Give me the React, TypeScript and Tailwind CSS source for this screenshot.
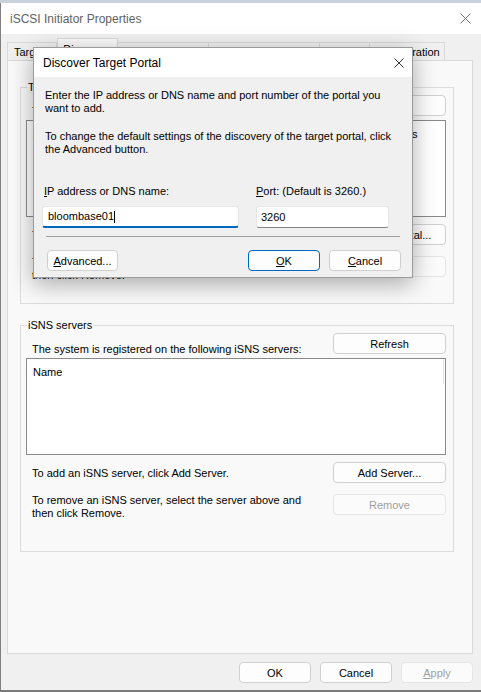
import React from "react";

const FONT = "font-['Liberation_Sans',Arial,sans-serif]";

type ButtonProps = {
  children: React.ReactNode;
  className?: string;
  disabled?: boolean;
  primary?: boolean;
};

function Button({ children, className = "", disabled, primary }: ButtonProps) {
  const tone = disabled
    ? "border-[#e5e5e5] bg-[#fbfbfb] text-[#a0a0a0]"
    : primary
      ? "border-[#0067c0] bg-[#fdfdfd] text-black"
      : "border-[#d0d0d0] bg-[#fdfdfd] text-black";
  return (
    <button
      disabled={disabled}
      className={`flex h-[21px] shrink-0 items-center justify-center rounded-[4px] border leading-[14px] ${tone} ${className}`}
    >
      {children}
    </button>
  );
}

// access key: first letter underlined
const Key = ({ children }: { children: string }) => (
  <span className="inline-block first-letter:underline">{children}</span>
);

const CloseIcon = ({ className }: { className: string }) => (
  <svg viewBox="0 0 10 10" className={className} fill="none" stroke="currentColor" strokeWidth="0.9">
    <path d="M0.5 0.5 9.5 9.5 M9.5 0.5 0.5 9.5" />
  </svg>
);

const tabs = [
  { label: "Targets", w: "w-[50px]" },
  { label: "Discovery", w: "w-[61px]", active: true },
  { label: "Favorite Targets", w: "w-[91px]" },
  { label: "Volumes and Devices", w: "w-[111px]" },
  { label: "RADIUS", w: "w-[50px]" },
  { label: "Configuration", w: "w-[75px]" },
];

function Group({ title, className = "", children }: { title: string; className?: string; children: React.ReactNode }) {
  return (
    <fieldset className={`ml-[12px] w-[434px] border border-[#dcdcdc] pl-[5px] pr-[7px] ${className}`}>
      <legend className="ml-[1px] px-[1px] leading-[14px]">{title}</legend>
      {children}
    </fieldset>
  );
}

function ServerList({ heading, addText, addLabel, removeText, children }: {
  heading: string;
  addText: string;
  addLabel: string;
  removeText: React.ReactNode;
  children: React.ReactNode;
}) {
  return (
    <>
      <div className="mt-[1px] flex h-[21px] items-end justify-between">
        <span className="mb-[-2px] ml-[6px]">{heading}</span>
        <Button className="w-[113px]">Refresh</Button>
      </div>
      <div className="mt-[4px] h-[97px] border border-[#8a8a8a] bg-white">{children}</div>
      <div className="mt-[7px] flex h-[21px] items-center justify-between">
        <span className="ml-[6px]">{addText}</span>
        <Button className="w-[113px]">{addLabel}</Button>
      </div>
      <div className="mt-[11px] flex items-start justify-between">
        <span className="ml-[6px] leading-[13px]">{removeText}</span>
        <Button disabled className="w-[113px]">Remove</Button>
      </div>
    </>
  );
}

function DiscoverPortalDialog() {
  return (
    <div className="absolute left-[33px] top-[47px] z-20 w-[380px] border border-[#9a9a9a] bg-[#f0f0f0] shadow-[0_6px_22px_rgba(0,0,0,0.32)]">
      <div className="flex h-[29px] items-center justify-between bg-white pl-[9px] pr-[8px] text-[12px]">
        <span>Discover Target Portal</span>
        <CloseIcon className="h-[10px] w-[10px] text-[#1b1b1b]" />
      </div>
      <div className="pb-[6px] pt-[12px] leading-[13px]">
        <p className="pl-[11px]">
          Enter the IP address or DNS name and port number of the portal you
          <br />
          want to add.
        </p>
        <p className="mt-[15px] pl-[11px]">
          To change the default settings of the discovery of the target portal, click
          <br />
          the Advanced button.
        </p>
        <div className="ml-[8px] mt-[29px] flex gap-[17px]">
          <div className="w-[197px]">
            <div className="pl-[2px]">
              <Key>IP address or DNS name:</Key>
            </div>
            <div className="mt-[8px] flex h-[22px] items-center rounded-[3px] border border-[#e5e5e5] border-b-2 border-b-[#0067c0] bg-white pl-[5px]">
              <span>bloombase01</span>
              <span className="h-[12px] w-px bg-black" />
            </div>
          </div>
          <div className="w-[133px]">
            <div>
              <Key>Port: (Default is 3260.)</Key>
            </div>
            <div className="mt-[8px] flex h-[22px] items-center rounded-[3px] border border-[#e5e5e5] border-b-[#868686] bg-white pl-[4px]">
              3260
            </div>
          </div>
        </div>
        <div className="mx-[12px] mt-[8px] h-px bg-[#a0a0a0]" />
        <div className="mt-[13px] flex justify-between pl-[13px] pr-[11px]">
          <Button className="w-[71px]">
            <Key>Advanced...</Key>
          </Button>
          <div className="flex gap-[9px]">
            <Button primary className="w-[72px]">
              <Key>OK</Key>
            </Button>
            <Button className="w-[72px]">
              <Key>Cancel</Key>
            </Button>
          </div>
        </div>
      </div>
    </div>
  );
}

export default function App() {
  return (
    <div className={`relative h-[692px] w-[481px] overflow-hidden bg-[#f0f0f0] text-[11px] leading-[14px] text-black ${FONT}`}>
      <div className="h-[3px] bg-[#c9d1da]" />
      <div className="flex h-[687px] flex-col border-l border-[#7f7f7f]">
        <div className="flex h-[31px] items-center justify-between bg-white pl-[9px] pr-[10px] text-[12px] text-[#626262]">
          <span>iSCSI Initiator Properties</span>
          <CloseIcon className="h-[11px] w-[11px] text-[#707070]" />
        </div>

        <div className="mt-[4px] flex h-[22px] items-end pl-[6px]">
          {tabs.map((tab, i) =>
            tab.active ? (
              <div
                key={tab.label}
                className={`relative z-10 -mb-px flex h-[23px] items-center justify-center border-x border-t border-[#d9d9d9] bg-[#f9f9f9] pb-[2px] ${tab.w}`}
              >
                {tab.label}
              </div>
            ) : (
              <div
                key={tab.label}
                className={`flex h-[18px] items-center justify-center border-t border-r border-[#d9d9d9] ${i === 0 ? "border-l" : ""} ${tab.w}`}
              >
                {tab.label}
              </div>
            )
          )}
        </div>

        <div className="ml-[6px] h-[594px] w-[466px] border border-[#d9d9d9] bg-[#f9f9f9]">
          <Group title="Target portals" className="mt-[19px] h-[224px]">
            <ServerList
              heading="The system will look for Targets on following portals:"
              addText="To add a target portal, click Discover Portal."
              addLabel="Discover Portal..."
              removeText={
                <>
                  To remove a target portal, select the address above and
                  <br />
                  then click Remove.
                </>
              }
            >
              <div className="flex h-[25px] items-center pl-[6px] pt-[1px]">
                <span className="w-[82px]">Address</span>
                <span className="w-[60px]">Port</span>
                <span className="w-[190px]">Adapter</span>
                <span>IP address</span>
              </div>
            </ServerList>
          </Group>

          <Group title="iSNS servers" className="mt-[14px] h-[234px]">
            <ServerList
              heading="The system is registered on the following iSNS servers:"
              addText="To add an iSNS server, click Add Server."
              addLabel="Add Server..."
              removeText={
                <>
                  To remove an iSNS server, select the server above and
                  <br />
                  then click Remove.
                </>
              }
            >
              <div className="flex h-[25px]">
                <div className="flex flex-1 items-center border-r border-[#e5e5e5] pl-[6px] pt-[1px]">Name</div>
                <div className="w-px" />
              </div>
            </ServerList>
          </Group>
        </div>

        <div className="mt-[8px] flex justify-end gap-[9px] pr-[8px]">
          <Button className="w-[72px]">OK</Button>
          <Button className="w-[72px]">Cancel</Button>
          <Button disabled className="w-[72px]">
            <Key>Apply</Key>
          </Button>
        </div>
      </div>
      <div className="h-[2px] bg-[#7a7a7a]" />

      <DiscoverPortalDialog />
    </div>
  );
}
